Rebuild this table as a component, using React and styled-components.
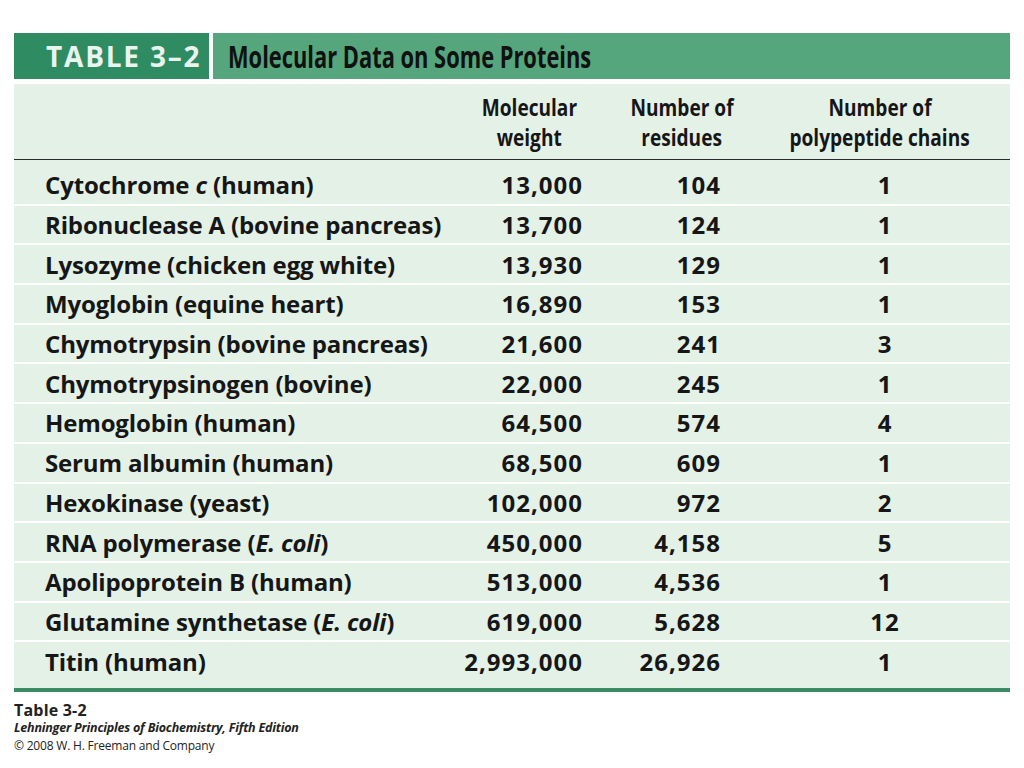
import React from 'react';
import styled, { createGlobalStyle } from 'styled-components';

const GlobalStyle = createGlobalStyle`
  html, body {
    margin: 0;
    padding: 0;
    background: #ffffff;
  }
  body {
    font-family: "Open Sans", "Liberation Sans", sans-serif;
    color: #161616;
  }
`;

const colors = {
  titleDark: '#2f8c62',
  titleLight: '#55a67c',
  titleText: '#eaf4ee',
  body: '#e3f1e7',
  rule: '#3b8c65',
  ink: '#161616',
};

const Page = styled.div`
  width: 1024px;
  height: 768px;
  padding: 33px 14px 0 14px;
  box-sizing: border-box;
`;

// no condensed face is installed, so squeeze the bold sans sideways
const Squeeze = styled.span`
  display: inline-block;
  white-space: nowrap;
  transform: scaleX(${(p) => p.$scale || 0.8});
  transform-origin: ${(p) => p.$origin || 'center'};
`;

const TitleBar = styled.div`
  display: flex;
  height: 46px;
  gap: 4px;
`;

const TitleCell = styled.div`
  display: flex;
  align-items: center;
  background: ${(p) => (p.$dark ? colors.titleDark : colors.titleLight)};
  width: ${(p) => (p.$dark ? '195px' : 'auto')};
  flex: ${(p) => (p.$dark ? '0 0 auto' : '1')};
  padding-left: ${(p) => (p.$dark ? '32px' : '15px')};
  box-sizing: border-box;
  font-weight: 700;
  font-size: ${(p) => (p.$dark ? '28px' : '31px')};
  letter-spacing: ${(p) => (p.$dark ? '1.8px' : '0')};
  color: ${(p) => (p.$dark ? colors.titleText : '#111')};
  overflow: hidden;
`;

const Body = styled.div`
  margin-top: 5px;
  background: ${colors.body};
  border-bottom: 4px solid ${colors.rule};
  padding-bottom: 8px;
`;

const HeadRow = styled.div`
  display: grid;
  grid-template-columns: 445px 140px 166px 230px 1fr;
  height: 76px;
  align-items: center;
  border-bottom: 1.5px solid #2a2a2a;
  box-sizing: border-box;
  font-weight: 700;
  font-size: 23px;
  line-height: 30px;
  color: ${colors.ink};
`;

const HeadCell = styled.div`
  display: flex;
  flex-direction: column;
  align-items: center;
  padding-top: 1px;
`;

const Row = styled.div`
  display: grid;
  grid-template-columns: 445px 123px 138px 40px 250px;
  height: 37.7px;
  padding-top: ${(p) => (p.$first ? '6px' : '0')};
  align-items: center;
  border-top: ${(p) => (p.$first ? '0' : '2px solid #ffffff')};
  font-weight: 700;
  font-size: 24px;
  color: ${colors.ink};
`;

const NameCell = styled.div`
  padding-left: 31px;
  white-space: nowrap;
  letter-spacing: -0.15px;

  i {
    font-style: italic;
  }
`;

const NumCell = styled.div`
  text-align: ${(p) => p.$align || 'right'};
  grid-column: ${(p) => p.$col || 'auto'};
  letter-spacing: 1px;
  margin-right: ${(p) => (p.$align === 'center' ? '0' : '-1px')};
`;

const Footer = styled.div`
  padding-top: 9px;
  color: #222;
`;

const FootTitle = styled.div`
  font-weight: 700;
  font-size: 16px;
  line-height: 18px;
  letter-spacing: 0.2px;
`;

const FootBook = styled.div`
  font-weight: 700;
  font-style: italic;
  font-size: 12.5px;
  line-height: 18px;
  letter-spacing: -0.2px;
`;

const FootCopy = styled.div`
  font-size: 12px;
  line-height: 18px;
  letter-spacing: -0.2px;
`;

const proteins = [
  { name: <>Cytochrome <i>c</i> (human)</>, mw: '13,000', res: '104', chains: '1' },
  { name: 'Ribonuclease A (bovine pancreas)', mw: '13,700', res: '124', chains: '1' },
  { name: 'Lysozyme (chicken egg white)', mw: '13,930', res: '129', chains: '1' },
  { name: 'Myoglobin (equine heart)', mw: '16,890', res: '153', chains: '1' },
  { name: 'Chymotrypsin (bovine pancreas)', mw: '21,600', res: '241', chains: '3' },
  { name: 'Chymotrypsinogen (bovine)', mw: '22,000', res: '245', chains: '1' },
  { name: 'Hemoglobin (human)', mw: '64,500', res: '574', chains: '4' },
  { name: 'Serum albumin (human)', mw: '68,500', res: '609', chains: '1' },
  { name: 'Hexokinase (yeast)', mw: '102,000', res: '972', chains: '2' },
  { name: <>RNA polymerase (<i>E. coli</i>)</>, mw: '450,000', res: '4,158', chains: '5' },
  { name: 'Apolipoprotein B (human)', mw: '513,000', res: '4,536', chains: '1' },
  { name: <>Glutamine synthetase (<i>E. coli</i>)</>, mw: '619,000', res: '5,628', chains: '12' },
  { name: 'Titin (human)', mw: '2,993,000', res: '26,926', chains: '1' },
];

const headers = [
  ['Molecular', 'weight'],
  ['Number of', 'residues'],
  ['Number of', 'polypeptide chains'],
];

const App = () => (
  <Page>
    <GlobalStyle />
    <TitleBar>
      <TitleCell $dark>TABLE 3–2</TitleCell>
      <TitleCell>
        <Squeeze $scale={0.705} $origin="left">Molecular Data on Some Proteins</Squeeze>
      </TitleCell>
    </TitleBar>

    <Body>
      <HeadRow>
        <div />
        {headers.map((lines, i) => (
          <HeadCell key={i}>
            {lines.map((line) => (
              <Squeeze key={line} $scale={0.83}>{line}</Squeeze>
            ))}
          </HeadCell>
        ))}
      </HeadRow>

      {proteins.map((p, i) => (
        <Row key={i} $first={i === 0}>
          <NameCell>{p.name}</NameCell>
          <NumCell>{p.mw}</NumCell>
          <NumCell>{p.res}</NumCell>
          <NumCell $col="5" $align="center">{p.chains}</NumCell>
        </Row>
      ))}
    </Body>

    <Footer>
      <FootTitle>Table 3-2</FootTitle>
      <FootBook>Lehninger Principles of Biochemistry, Fifth Edition</FootBook>
      <FootCopy>© 2008 W. H. Freeman and Company</FootCopy>
    </Footer>
  </Page>
);

export default App;
